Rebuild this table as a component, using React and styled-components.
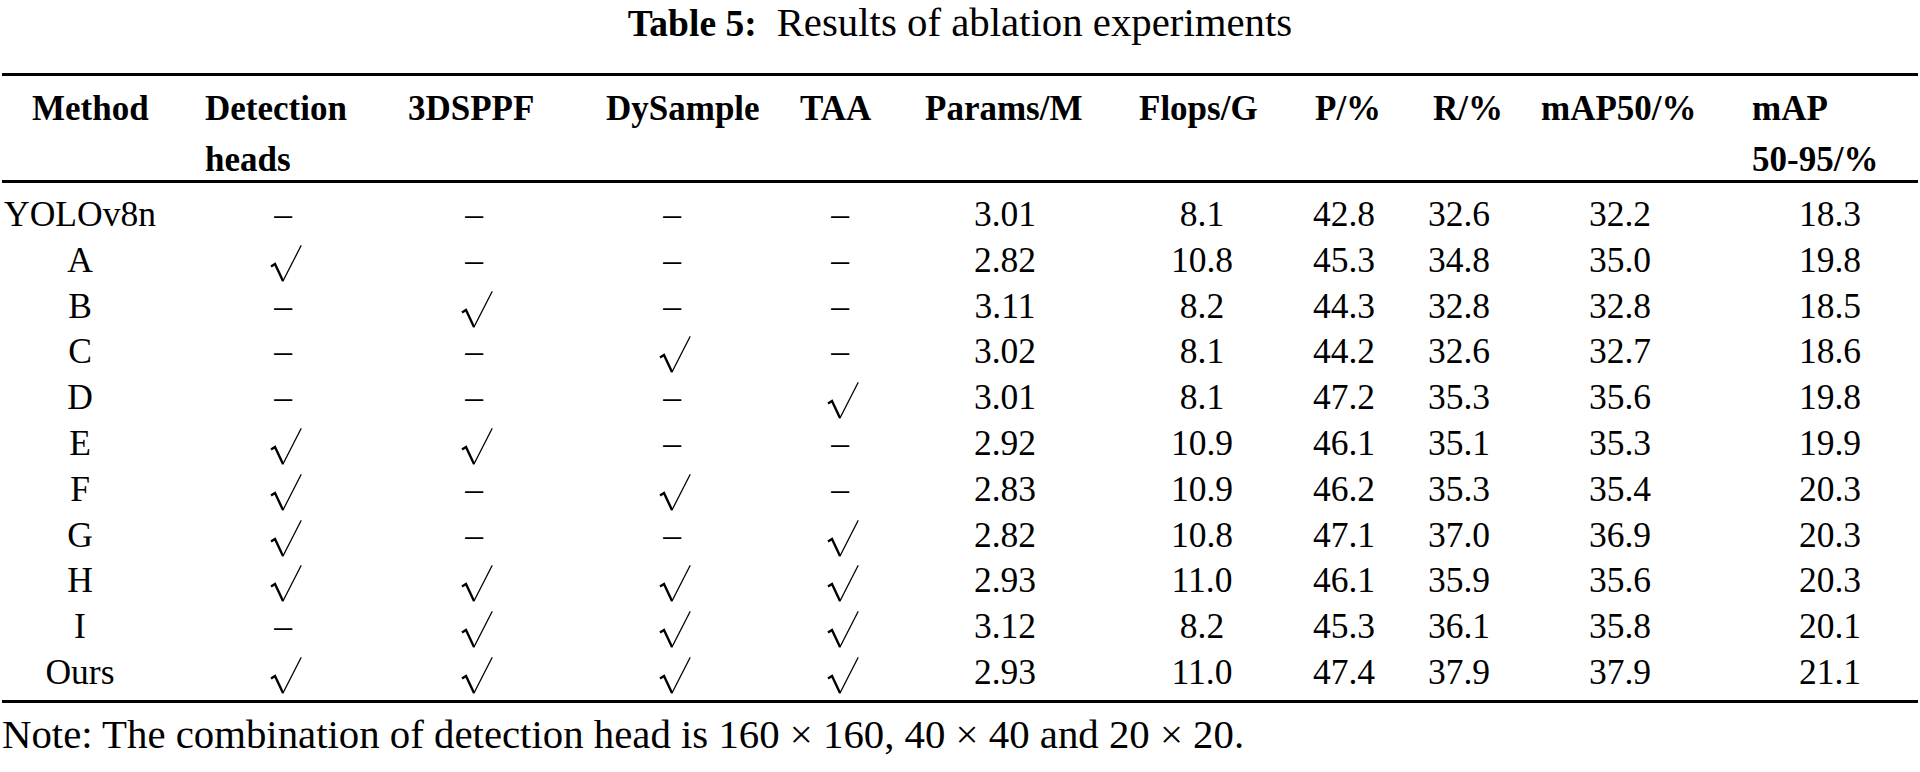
import React from "react";
import styled, { createGlobalStyle } from "styled-components";

const Global = createGlobalStyle`
  html, body { margin: 0; padding: 0; background: #fff; }
  body { font-family: "Liberation Serif", "Times New Roman", serif; color: #000; }
`;

const Page = styled.div`
  width: 1920px;
  padding: 0 2px;
  box-sizing: border-box;
`;

const Title = styled.div`
  text-align: center;
  font-size: 40.8px;
  line-height: 45px;
  white-space: nowrap;
`;

const TitleLabel = styled.b`
  font-size: 37.5px;
  font-weight: 700;
  margin-right: 20px;
`;

const Table = styled.div`
  margin-top: 27px;
  border-top: 3px solid #000;
  border-bottom: 3px solid #000;
`;

const Row = styled.div`
  display: grid;
  grid-template-columns: ${(p) => p.$cols};
`;

const HeadRow = styled(Row)`
  border-bottom: 3px solid #000;
  height: 104px;
`;

const HeadCell = styled.div`
  padding-left: ${(p) => p.$pad}px;
  padding-top: 7px;
  font-size: 35px;
  font-weight: 700;
  line-height: 51px;
  white-space: nowrap;
`;

const HeadLine = styled.div``;

const Body = styled.div`
  padding: 9px 0 4px;
`;

const DataRow = styled(Row)`
  height: 45.8px;
`;

const DataCell = styled.div`
  width: ${(p) => p.$center * 2}px;
  display: flex;
  justify-content: center;
  align-items: flex-start;
  font-size: 35.5px;
  line-height: 45.8px;
  white-space: nowrap;
`;

const CheckMark = styled.svg`
  display: block;
  width: 32px;
  height: 38px;
  margin-top: 7px;
  margin-left: 5px;
  flex: none;
`;

const Note = styled.div`
  margin-top: 12.5px;
  font-size: 40.8px;
  line-height: 40px;
  white-space: nowrap;
`;

const cols = [
  { w: 203, pad: 30, c: 78, label: ["Method"] },
  { w: 203, pad: 0, c: 78, label: ["Detection", "heads"] },
  { w: 198, pad: 0, c: 66, label: ["3DSPPF"] },
  { w: 194, pad: 0, c: 66, label: ["DySample"] },
  { w: 125, pad: 0, c: 40, label: ["TAA"] },
  { w: 214, pad: 0, c: 80, label: ["Params/M"] },
  { w: 176, pad: 0, c: 63, label: ["Flops/G"] },
  { w: 118, pad: 0, c: 29, label: ["P/%"] },
  { w: 108, pad: 0, c: 26, label: ["R/%"] },
  { w: 211, pad: 0, c: 79, label: ["mAP50/%"] },
  { w: 166, pad: 0, c: 78, label: ["mAP", "50-95/%"] },
];

const template = cols.map((c) => `${c.w}px`).join(" ");

const rows = [
  ["YOLOv8n", "-", "-", "-", "-", "3.01", "8.1", "42.8", "32.6", "32.2", "18.3"],
  ["A", "y", "-", "-", "-", "2.82", "10.8", "45.3", "34.8", "35.0", "19.8"],
  ["B", "-", "y", "-", "-", "3.11", "8.2", "44.3", "32.8", "32.8", "18.5"],
  ["C", "-", "-", "y", "-", "3.02", "8.1", "44.2", "32.6", "32.7", "18.6"],
  ["D", "-", "-", "-", "y", "3.01", "8.1", "47.2", "35.3", "35.6", "19.8"],
  ["E", "y", "y", "-", "-", "2.92", "10.9", "46.1", "35.1", "35.3", "19.9"],
  ["F", "y", "-", "y", "-", "2.83", "10.9", "46.2", "35.3", "35.4", "20.3"],
  ["G", "y", "-", "-", "y", "2.82", "10.8", "47.1", "37.0", "36.9", "20.3"],
  ["H", "y", "y", "y", "y", "2.93", "11.0", "46.1", "35.9", "35.6", "20.3"],
  ["I", "-", "y", "y", "y", "3.12", "8.2", "45.3", "36.1", "35.8", "20.1"],
  ["Ours", "y", "y", "y", "y", "2.93", "11.0", "47.4", "37.9", "37.9", "21.1"],
];

function Check() {
  return (
    <CheckMark viewBox="0 0 32 38" aria-label="√">
      <path d="M1 21.5 L5 19 L13 36" fill="none" stroke="#000" strokeWidth="2.4" strokeLinejoin="miter" />
      <path d="M13 36 L31 0.8" fill="none" stroke="#000" strokeWidth="1.3" strokeLinecap="round" />
    </CheckMark>
  );
}

function renderValue(v) {
  if (v === "y") return <Check />;
  if (v === "-") return <span>–</span>;
  return <span>{v}</span>;
}

export default function App() {
  return (
    <Page>
      <Global />
      <Title>
        <TitleLabel>Table 5:</TitleLabel>Results of ablation experiments
      </Title>
      <Table>
        <HeadRow $cols={template}>
          {cols.map((c) => (
            <HeadCell key={c.label.join(" ")} $pad={c.pad}>
              {c.label.map((l) => (
                <HeadLine key={l}>{l}</HeadLine>
              ))}
            </HeadCell>
          ))}
        </HeadRow>
        <Body>
          {rows.map((r) => (
            <DataRow key={r[0]} $cols={template}>
              {r.map((v, i) => (
                <DataCell key={i} $center={cols[i].c}>
                  {renderValue(v)}
                </DataCell>
              ))}
            </DataRow>
          ))}
        </Body>
      </Table>
      <Note>Note: The combination of detection head is 160 × 160, 40 × 40 and 20 × 20.</Note>
    </Page>
  );
}
